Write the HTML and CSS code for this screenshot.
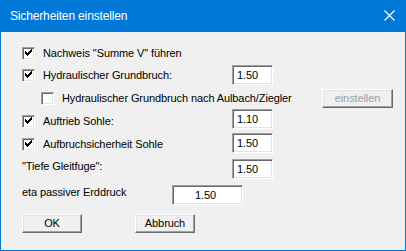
FILE: index.html
```html
<!DOCTYPE html>
<html>
<head>
<meta charset="utf-8">
<link rel="stylesheet" href="styles.css">
</head>
<body>
<div class="window">
  <div class="titlebar">
    <span class="title">Sicherheiten einstellen</span>
    <svg class="close" width="11" height="11" viewBox="0 0 11 11"><path d="M0.5 0.5L10.5 10.5M10.5 0.5L0.5 10.5" stroke="#fff" stroke-width="1.1" fill="none"/></svg>
  </div>
  <div class="content">
    <div class="row r1">
      <span class="cb"><svg width="9" height="9" viewBox="0 0 9 9"><path d="M1 2h1v3H1zM2 3h1v3H2zM3 4h1v3H3zM4 3h1v3H4zM5 2h1v3H5zM6 1h1v3H6zM7 0h1v3H7z" fill="#000"/></svg></span>
      <span class="label">Nachweis "Summe V" führen</span>
    </div>
    <div class="row r2">
      <div class="left w210">
        <span class="cb"><svg width="9" height="9" viewBox="0 0 9 9"><path d="M1 2h1v3H1zM2 3h1v3H2zM3 4h1v3H3zM4 3h1v3H4zM5 2h1v3H5zM6 1h1v3H6zM7 0h1v3H7z" fill="#000"/></svg></span>
        <span class="label">Hydraulischer Grundbruch:</span>
      </div>
      <span class="edit">1.50</span>
    </div>
    <div class="row r3">
      <div class="left w300 indent">
        <span class="cb"></span>
        <span class="label">Hydraulischer Grundbruch nach Aulbach/Ziegler</span>
      </div>
      <span class="btn disabled wide">einstellen</span>
    </div>
    <div class="row r4">
      <div class="left w210 down2">
        <span class="cb"><svg width="9" height="9" viewBox="0 0 9 9"><path d="M1 2h1v3H1zM2 3h1v3H2zM3 4h1v3H3zM4 3h1v3H4zM5 2h1v3H5zM6 1h1v3H6zM7 0h1v3H7z" fill="#000"/></svg></span>
        <span class="label">Auftrieb Sohle:</span>
      </div>
      <span class="edit">1.10</span>
    </div>
    <div class="row r5">
      <div class="left w210 down1">
        <span class="cb"><svg width="9" height="9" viewBox="0 0 9 9"><path d="M1 2h1v3H1zM2 3h1v3H2zM3 4h1v3H3zM4 3h1v3H4zM5 2h1v3H5zM6 1h1v3H6zM7 0h1v3H7z" fill="#000"/></svg></span>
        <span class="label">Aufbruchsicherheit Sohle</span>
      </div>
      <span class="edit">1.50</span>
    </div>
    <div class="row r6">
      <div class="left w210 up3">
        <span class="label">"Tiefe Gleitfuge":</span>
      </div>
      <span class="edit">1.50</span>
    </div>
    <div class="row r7">
      <div class="left w150 up2">
        <span class="label">eta passiver Erddruck</span>
      </div>
      <span class="edit long">1.50</span>
    </div>
    <div class="buttons">
      <span class="btn">OK</span>
      <span class="btn">Abbruch</span>
    </div>
  </div>
</div>
</body>
</html>
```
FILE: styles.css
```css
html, body {
  margin: 0;
  padding: 0;
}
body {
  width: 406px;
  height: 251px;
  overflow: hidden;
  font-family: "Liberation Sans", Arial, sans-serif;
  font-size: 11px;
  letter-spacing: -0.1px;
  color: #000;
}
.window {
  box-sizing: border-box;
  width: 406px;
  height: 251px;
  border: 1px solid #0078d7;
  border-top: none;
  background: #f0f0f0;
  display: flex;
  flex-direction: column;
}
.titlebar {
  height: 31px;
  margin: 0 -1px;
  background: #0078d7;
  display: flex;
  align-items: center;
  justify-content: space-between;
  padding: 0 11px 1px 10px;
  flex: none;
}
.title {
  color: #fff;
  font-size: 12px;
  letter-spacing: -0.15px;
}
.close {
  display: block;
}
.content {
  padding: 11px 0 0 21px;
  display: flex;
  flex-direction: column;
}
.row {
  height: 20px;
  display: flex;
  align-items: center;
}
.r2 { margin-top: 2px; }
.r3 { margin-top: 3px; }
.r4 { margin-top: 1px; }
.r5 { margin-top: 4px; }
.r6 { margin-top: 6px; }
.r7 { margin-top: 6px; }
.left {
  display: flex;
  align-items: center;
  flex: none;
}
.w210 { width: 210px; }
.w300 { width: 300px; }
.w150 { width: 150px; }
.indent { padding-left: 19px; box-sizing: border-box; }
.down2 { padding-top: 4px; }
.down1 { padding-top: 2px; }
.up3 { padding-bottom: 6px; }
.up2 { padding-bottom: 5px; }
.cb {
  box-sizing: border-box;
  width: 13px;
  height: 13px;
  background: #fff;
  border: 1px solid;
  border-color: #a0a0a0 #fff #fff #a0a0a0;
  box-shadow: inset 1px 1px 0 #696969, inset -1px -1px 0 #e3e3e3;
  display: flex;
  align-items: center;
  justify-content: center;
  flex: none;
  margin-right: 8px;
}
.cb svg {
  display: block;
  shape-rendering: crispEdges;
}
.label {
  white-space: nowrap;
  line-height: 13px;
}
.edit {
  box-sizing: border-box;
  width: 41px;
  height: 20px;
  background: #fff;
  border: 1px solid;
  border-color: #a0a0a0 #fff #fff #a0a0a0;
  box-shadow: inset 1px 1px 0 #696969, inset -1px -1px 0 #e3e3e3;
  padding: 0 0 0 4px;
  line-height: 18px;
  flex: none;
}
.edit.long {
  width: 71px;
  text-align: center;
  padding: 0 4px 0 0;
}
.btn {
  box-sizing: border-box;
  width: 60px;
  height: 19px;
  background: #f0f0f0;
  border: 1px solid;
  border-color: #fff #696969 #696969 #fff;
  box-shadow: inset -1px -1px 0 #a0a0a0, inset 1px 1px 0 #e3e3e3;
  text-align: center;
  line-height: 16px;
  flex: none;
}
.btn.wide { width: 71px; }
.btn.disabled { color: #a0a0a0; }
.buttons {
  margin-top: 9px;
  display: flex;
  gap: 53px;
}
```
